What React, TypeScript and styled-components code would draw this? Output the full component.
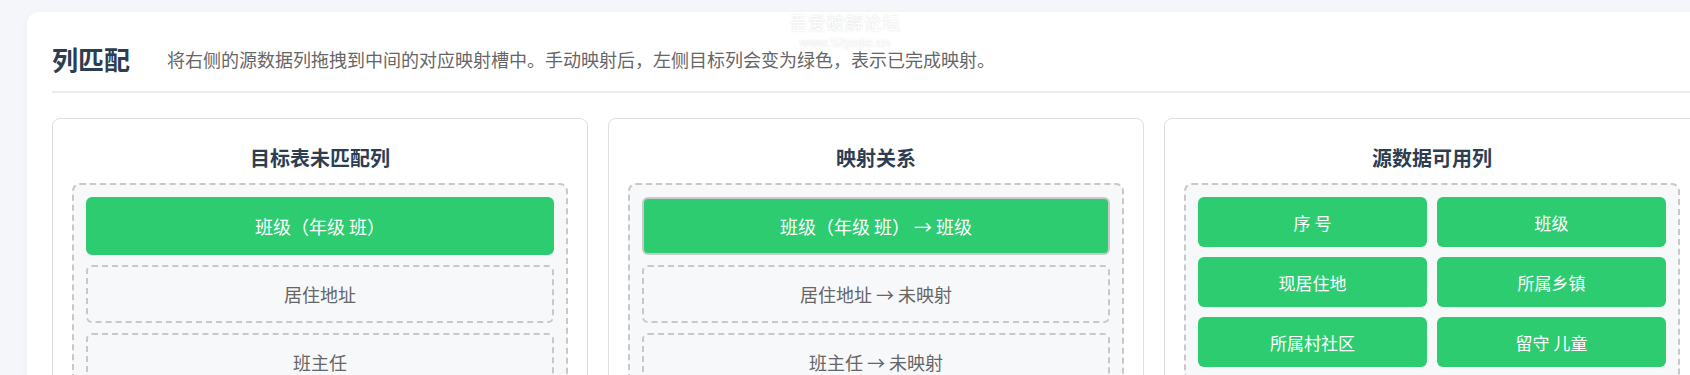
import React from "react";
import styled, { createGlobalStyle } from "styled-components";

const GlobalStyle = createGlobalStyle`
  html, body {
    margin: 0;
    padding: 0;
    background: #f4f6f9;
    overflow: hidden;
  }
  body {
    font-family: "Noto Sans CJK SC", "Noto Sans", "Liberation Sans", sans-serif;
  }
  * { box-sizing: border-box; }
`;

const Page = styled.div`
  position: relative;
  padding: 12px 0 0 27px;
`;

const Panel = styled.section`
  width: max-content;
  background: #ffffff;
  border-radius: 12px;
  padding: 27px 25px 25px;
  box-shadow: 0 2px 10px rgba(0, 0, 0, 0.03);
`;

const Header = styled.header`
  display: flex;
  align-items: center;
  gap: 37px;
  padding-bottom: 13px;
  border-bottom: 2px solid #e9edf0;
`;

const Title = styled.h2`
  margin: 0;
  font-size: 26px;
  line-height: 39px;
  font-weight: 700;
  color: #2c3e50;
`;

const Description = styled.p`
  margin: 0;
  font-size: 18px;
  line-height: 20px;
  color: #666;
`;

const Columns = styled.div`
  display: grid;
  grid-template-columns: repeat(3, 536px);
  gap: 20px;
  margin-top: 25px;
`;

const Column = styled.div`
  background: #fff;
  border: 1px solid #dcdfe3;
  border-radius: 8px;
  padding: 24px 19px 19px;
`;

const ColumnTitle = styled.h3`
  margin: 0 0 10px;
  text-align: center;
  font-size: 20px;
  line-height: 30px;
  font-weight: 700;
  color: #2c3e50;
`;

const DropZone = styled.div<{ $grid?: boolean }>`
  border: 2px dashed #c8c8c8;
  border-radius: 8px;
  background: #f7f8fa;
  padding: 12px;
  display: ${(p) => (p.$grid ? "grid" : "flex")};
  ${(p) =>
    p.$grid
      ? "grid-template-columns: 1fr 1fr; gap: 10px;"
      : "flex-direction: column; gap: 10px;"}
`;

const Slot = styled.div<{ $filled?: boolean; $framed?: boolean }>`
  border-radius: 6px;
  padding: 14px;
  font-size: 18px;
  line-height: 26px;
  text-align: center;
  text-spacing-trim: space-all;
  border: 2px
    ${(p) => (p.$filled ? "solid" : "dashed")}
    ${(p) => (p.$filled ? (p.$framed ? "#c9c9c9" : "#2ecc71") : "#c8c8c8")};
  background: ${(p) => (p.$filled ? "#2ecc71" : "#f7f8fa")};
  color: ${(p) => (p.$filled ? "#ffffff" : "#666666")};
`;

const Chip = styled.div`
  height: 50px;
  display: flex;
  align-items: center;
  justify-content: center;
  border-radius: 6px;
  background: #2ecc71;
  color: #ffffff;
  font-size: 17px;
`;

const Watermark = styled.div`
  position: absolute;
  left: 789px;
  top: 11px;
  width: 112px;
  text-align: center;
  color: #ffffff;
  text-shadow: 0 0 1px rgba(0, 0, 0, 0.12), 0 0 3px rgba(0, 0, 0, 0.08);
  pointer-events: none;
`;

const WatermarkName = styled.div`
  font-size: 18px;
  line-height: 22px;
  letter-spacing: 0.5px;
`;

const WatermarkUrl = styled.div`
  font-family: "Liberation Sans", sans-serif;
  font-size: 13px;
  line-height: 12px;
  margin-top: 4px;
`;

const targets = [
  { name: "班级（年级 班）", mapped: "班级" },
  { name: "居住地址", mapped: null },
  { name: "班主任", mapped: null },
];

const sources = ["序 号", "班级", "现居住地", "所属乡镇", "所属村社区", "留守 儿童"];

export default function App() {
  return (
    <>
      <GlobalStyle />
      <Page>
        <Panel>
          <Header>
            <Title>列匹配</Title>
            <Description>
              将右侧的源数据列拖拽到中间的对应映射槽中。手动映射后，左侧目标列会变为绿色，表示已完成映射。
            </Description>
          </Header>
          <Columns>
            <Column>
              <ColumnTitle>目标表未匹配列</ColumnTitle>
              <DropZone>
                {targets.map((t) => (
                  <Slot key={t.name} $filled={!!t.mapped}>
                    {t.name}
                  </Slot>
                ))}
              </DropZone>
            </Column>
            <Column>
              <ColumnTitle>映射关系</ColumnTitle>
              <DropZone>
                {targets.map((t) => (
                  <Slot key={t.name} $filled={!!t.mapped} $framed>
                    {t.name} → {t.mapped ?? "未映射"}
                  </Slot>
                ))}
              </DropZone>
            </Column>
            <Column>
              <ColumnTitle>源数据可用列</ColumnTitle>
              <DropZone $grid>
                {sources.map((s) => (
                  <Chip key={s}>{s}</Chip>
                ))}
              </DropZone>
            </Column>
          </Columns>
        </Panel>
        <Watermark>
          <WatermarkName>吾爱破解论坛</WatermarkName>
          <WatermarkUrl>www.52pojie.cn</WatermarkUrl>
        </Watermark>
      </Page>
    </>
  );
}
